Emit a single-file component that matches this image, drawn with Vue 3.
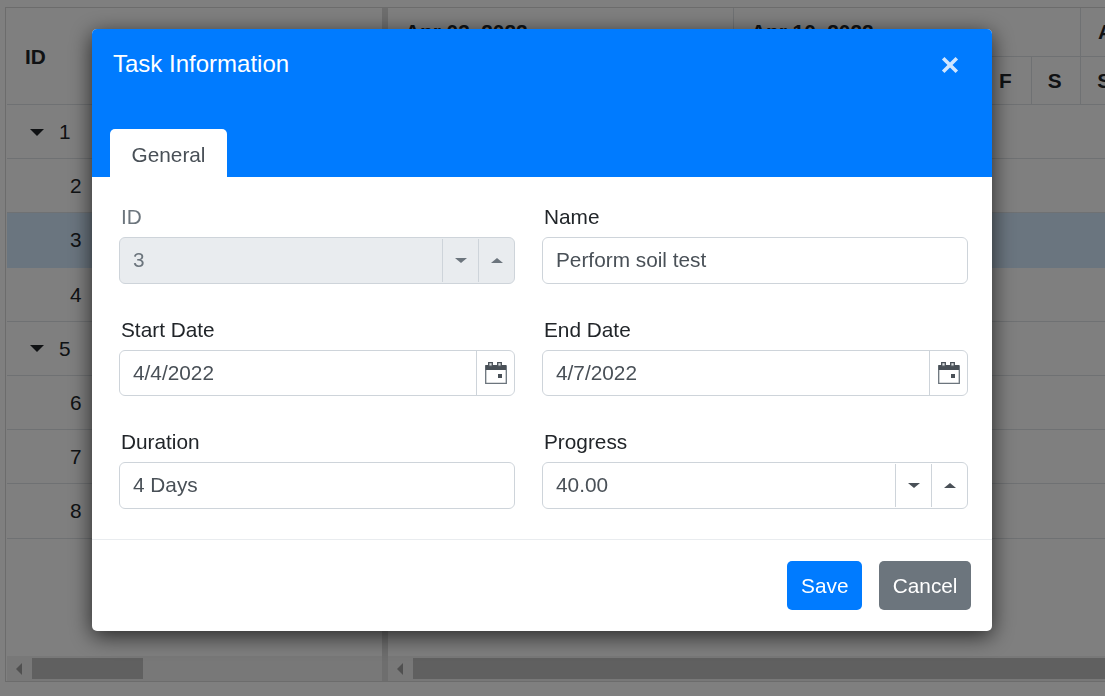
<script setup>
const rows = [
  { id: 1, parent: true },
  { id: 2 },
  { id: 3, selected: true },
  { id: 4 },
  { id: 5, parent: true },
  { id: 6 },
  { id: 7 },
  { id: 8 },
]
const weeks = ['Apr 03, 2022', 'Apr 10, 2022', 'Apr 17, 2022']
const days = ['S', 'M', 'T', 'W', 'T', 'F', 'S']
const allDays = [...days, ...days, 'S']
</script>

<template>
  <div class="page">
    <div class="gantt">
      <div class="panes">
        <section class="left">
          <div class="left-head">ID</div>
          <div
            v-for="r in rows"
            :key="r.id"
            class="row"
            :class="{ selected: r.selected, parent: r.parent }"
          >
            <span v-if="r.parent" class="caret"></span>
            <span>{{ r.id }}</span>
          </div>
        </section>
        <div class="splitter"></div>
        <section class="right">
          <div class="week-row">
            <div v-for="w in weeks" :key="w" class="week">{{ w }}</div>
          </div>
          <div class="day-row">
            <div v-for="(d, i) in allDays" :key="i" class="day">{{ d }}</div>
          </div>
          <div v-for="r in rows" :key="r.id" class="row chart-row" :class="{ selected: r.selected }"></div>
        </section>
      </div>
      <div class="scrolls">
        <div class="scroll scroll-left">
          <span class="arrow"></span>
          <span class="thumb thumb-left"></span>
        </div>
        <div class="scroll-gap"></div>
        <div class="scroll scroll-right">
          <span class="arrow"></span>
          <span class="thumb thumb-right"></span>
        </div>
      </div>
    </div>

    <div class="overlay"></div>

    <div class="modal">
      <header class="modal-head">
        <div class="title-row">
          <h2>Task Information</h2>
          <svg class="close" width="18" height="18" viewBox="0 0 18 18" aria-label="Close">
            <path d="M2.200 2.200 15.800 15.800M15.800 2.200 2.200 15.800" stroke="#cfe5ff" stroke-width="3.600" fill="none" />
          </svg>
        </div>
        <div class="tab">General</div>
      </header>

      <div class="form">
        <div class="field">
          <label class="muted">ID</label>
          <div class="input disabled">
            <span class="value raised">3</span>
            <span class="spin"><i class="down"></i></span>
            <span class="spin"><i class="up"></i></span>
          </div>
        </div>
        <div class="field">
          <label>Name</label>
          <div class="input"><span class="value raised">Perform soil test</span></div>
        </div>

        <div class="field">
          <label>Start Date</label>
          <div class="input short">
            <span class="value">4/4/2022</span>
            <span class="cal">
              <svg width="22" height="22" viewBox="0 0 22 22">
                <path d="M.7 4h20.600v17.300H.7z" fill="none" stroke="#6c757d" stroke-width="1.300" />
                <path d="M.5 3h20.500v5H.5z" fill="#495057" />
                <path d="M3.700.7h3.600v3.500H3.700zM12.700.7h3.600v3.500h-3.600z" fill="#dfe2e5" stroke="#495057" stroke-width="1.300" />
                <rect x="13" y="12" width="4" height="4" fill="#495057" />
              </svg>
            </span>
          </div>
        </div>
        <div class="field">
          <label>End Date</label>
          <div class="input short">
            <span class="value">4/7/2022</span>
            <span class="cal">
              <svg width="22" height="22" viewBox="0 0 22 22">
                <path d="M.7 4h20.600v17.300H.7z" fill="none" stroke="#6c757d" stroke-width="1.300" />
                <path d="M.5 3h20.500v5H.5z" fill="#495057" />
                <path d="M3.700.7h3.600v3.500H3.700zM12.700.7h3.600v3.500h-3.600z" fill="#dfe2e5" stroke="#495057" stroke-width="1.300" />
                <rect x="13" y="12" width="4" height="4" fill="#495057" />
              </svg>
            </span>
          </div>
        </div>

        <div class="field">
          <label>Duration</label>
          <div class="input"><span class="value raised">4 Days</span></div>
        </div>
        <div class="field">
          <label>Progress</label>
          <div class="input">
            <span class="value raised">40.00</span>
            <span class="spin"><i class="down"></i></span>
            <span class="spin"><i class="up"></i></span>
          </div>
        </div>
      </div>

      <footer class="modal-foot">
        <button class="btn primary">Save</button>
        <button class="btn secondary">Cancel</button>
      </footer>
    </div>
  </div>
</template>

<style>
html, body { margin: 0; background: #fff; overflow: hidden; }
</style>

<style scoped>
.page {
  width: 1105px;
  height: 696px;
  overflow: hidden;
  padding: 7px 0 0 5px;
  box-sizing: border-box;
  font-family: "Liberation Sans", Arial, sans-serif;
  font-size: 20.8px;
  color: #212529;
  background: #fff;
}
.gantt {
  width: 1300px;
  height: 675px;
  box-sizing: border-box;
  border: 1px solid #d8d8d8;
  display: flex;
  flex-direction: column;
}
.panes { display: flex; height: 648px; }
.left { width: 376px; flex: none; padding-left: 1px; box-sizing: border-box; }
.left-head {
  height: 97px;
  box-sizing: border-box;
  border-bottom: 1px solid #dee2e6;
  padding: 2px 0 0 18px;
  display: flex;
  align-items: center;
  font-weight: 700;
}
.row {
  height: 54.2px;
  box-sizing: border-box;
  border-bottom: 1px solid #dee2e6;
  display: flex;
  align-items: center;
  padding: 1px 0 0 63px;
}
.row.parent { padding-left: 23px; gap: 15px; }
.row.selected { background: #d5ebff; border-bottom-color: #d5ebff; }
.caret {
  width: 0;
  height: 0;
  border-left: 7.5px solid transparent;
  border-right: 7.5px solid transparent;
  border-top: 7.5px solid #212529;
}
.splitter { width: 6px; flex: none; background: #dcdcdc; }
.right { flex: 1; min-width: 0; }
.week-row { display: flex; height: 49px; border-bottom: 1px solid #dee2e6; box-sizing: border-box; }
.week {
  width: 347px;
  flex: none;
  box-sizing: border-box;
  border-right: 1px solid #dee2e6;
  padding-left: 17px;
  display: flex;
  align-items: center;
  font-weight: 700;
  white-space: nowrap;
}
.week:first-child { width: 346px; }
.day-row { display: flex; height: 48px; border-bottom: 1px solid #dee2e6; box-sizing: border-box; }
.day {
  width: 49.5px;
  flex: none;
  box-sizing: border-box;
  border-right: 1px solid #dee2e6;
  padding-right: 2px;
  display: flex;
  align-items: center;
  justify-content: center;
  font-weight: 700;
}
.chart-row { padding: 0; }
.scrolls { display: flex; height: 25px; }
.scroll {
  height: 25px;
  background: #f1f1f1;
  display: flex;
  align-items: center;
  box-sizing: border-box;
}
.scroll-left { width: 375px; margin-left: 1px; }
.scroll-gap { width: 6px; background: #dcdcdc; flex: none; }
.scroll-right { flex: 1; }
.arrow {
  width: 0;
  height: 0;
  margin-left: 9px;
  border-top: 6px solid transparent;
  border-bottom: 6px solid transparent;
  border-right: 6px solid #a0a0a0;
  flex: none;
}
.thumb { height: 21px; background: #c1c1c1; display: block; }
.thumb-left { width: 111px; margin-left: 10px; }
.thumb-right { flex: 1; margin-left: 10px; }

.overlay {
  position: fixed;
  inset: 0;
  background: rgba(0, 0, 0, 0.5);
}
.modal {
  position: fixed;
  left: 92px;
  top: 29px;
  width: 900px;
  height: 602px;
  background: #fff;
  border-radius: 5px;
  box-shadow: 0 5px 22px rgba(0, 0, 0, 0.7);
  display: flex;
  flex-direction: column;
  overflow: hidden;
}
.modal-head {
  height: 148px;
  flex: none;
  background: #007bff;
  display: flex;
  flex-direction: column;
  justify-content: space-between;
  padding-left: 18px;
  box-sizing: border-box;
}
.title-row {
  display: flex;
  justify-content: space-between;
  align-items: center;
  padding: 20px 33px 0 3px;
}
h2 {
  margin: 0;
  font-size: 24px;
  font-weight: 400;
  line-height: 30px;
  color: #fff;
}
.close { margin-top: 2px; }
.tab {
  width: 117px;
  height: 48px;
  box-sizing: border-box;
  background: #fff;
  border-radius: 5px 5px 0 0;
  color: #495057;
  display: flex;
  align-items: center;
  justify-content: center;
  padding-top: 4px;
}
.form {
  flex: 1;
  min-height: 0;
  display: grid;
  grid-template-columns: 396px 426px;
  grid-auto-rows: 112.5px;
  column-gap: 27px;
  align-content: start;
  padding: 27px 0 0 27px;
}
.field { display: flex; flex-direction: column; }
label {
  height: 33px;
  flex: none;
  padding-left: 2px;
  line-height: 26px;
}
label.muted { color: #6c757d; }
.input {
  height: 47px;
  flex: none;
  box-sizing: border-box;
  border: 1px solid #ced4da;
  border-radius: 6px;
  display: flex;
  align-items: stretch;
  color: #495057;
}
.input.short { height: 46px; }
.value { flex: 1; padding-left: 13px; display: flex; align-items: center; }
.value.raised { padding-bottom: 2px; }
.disabled { background: #e9ecef; color: #6c757d; }
.spin {
  width: 36px;
  flex: none;
  margin: 1px 0;
  padding-bottom: 1px;
  border-left: 1px solid #ced4da;
  box-sizing: border-box;
  display: flex;
  align-items: center;
  justify-content: center;
}
.down, .up {
  width: 0;
  height: 0;
  border-left: 6px solid transparent;
  border-right: 6px solid transparent;
}
.down { border-top: 5.5px solid currentColor; }
.up { border-bottom: 5.5px solid currentColor; }
.cal {
  width: 38px;
  flex: none;
  border-left: 1px solid #ced4da;
  box-sizing: border-box;
  display: flex;
  align-items: center;
  justify-content: center;
}
.modal-foot {
  height: 92px;
  flex: none;
  box-sizing: border-box;
  border-top: 1px solid #e9ecef;
  display: flex;
  justify-content: flex-end;
  gap: 17px;
  padding: 21px 21px 0 0;
}
.btn {
  height: 49px;
  border: 0;
  border-radius: 5px;
  padding: 0 13.5px;
  color: #fff;
  font: inherit;
}
.primary { background: #007bff; width: 75px; padding: 0; }
.secondary { background: #6c757d; }
</style>
